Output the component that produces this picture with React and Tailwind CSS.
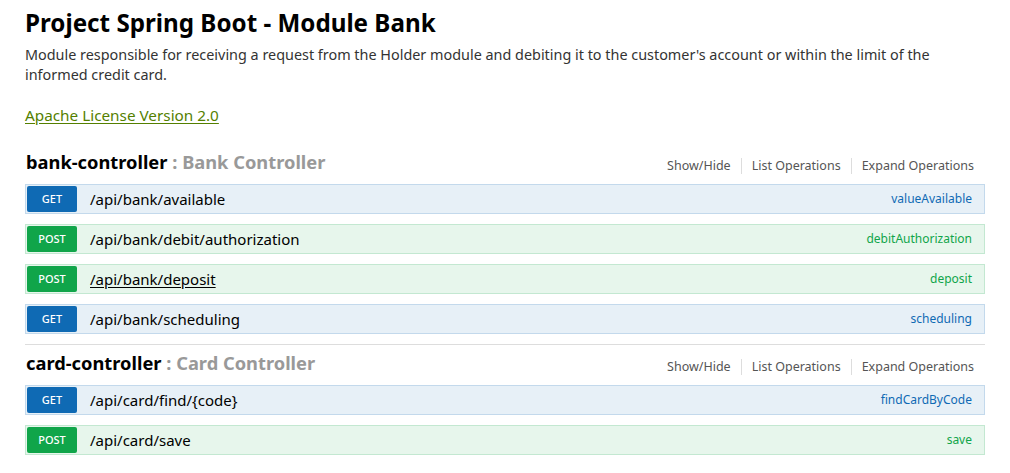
import React from 'react';

const groups = [
  {
    name: 'bank-controller',
    label: 'Bank Controller',
    ops: [
      { method: 'GET', path: '/api/bank/available', id: 'valueAvailable' },
      { method: 'POST', path: '/api/bank/debit/authorization', id: 'debitAuthorization' },
      { method: 'POST', path: '/api/bank/deposit', id: 'deposit', underline: true },
      { method: 'GET', path: '/api/bank/scheduling', id: 'scheduling' },
    ],
  },
  {
    name: 'card-controller',
    label: 'Card Controller',
    ops: [
      { method: 'GET', path: '/api/card/find/{code}', id: 'findCardByCode' },
      { method: 'POST', path: '/api/card/save', id: 'save' },
    ],
  },
];

function Operation({ method, path, id, underline }) {
  const get = method === 'GET';
  return (
    <div
      className={
        'flex items-center h-[30px] border p-px ' +
        (get ? 'bg-[#e7f0f7] border-[#c3d9ec]' : 'bg-[#e7f6ec] border-[#c3e8d1]')
      }
    >
      <span
        className={
          'w-[50px] h-full flex items-center justify-center rounded-[2px] text-[11px] font-medium text-white ' +
          (get ? 'bg-[#0f6ab4]' : 'bg-[#10a54a]')
        }
      >
        {method}
      </span>
      <span className={'ml-[13px] text-[15px] text-black ' + (underline ? 'underline underline-offset-2' : '')}>
        {path}
      </span>
      <span className={'ml-auto mr-[11px] text-[12px] ' + (get ? 'text-[#0f6ab4]' : 'text-[#10a54a]')}>
        {id}
      </span>
    </div>
  );
}

function Group({ name, label, ops, first }) {
  return (
    <div className={first ? 'mt-[19px]' : 'border-t border-[#ddd] mt-[10px]'}>
      <div className="flex items-center justify-between h-[40px] pb-[4px]">
        <h2 className="text-[18.3px] font-bold leading-none text-black pl-px">
          {name}
          <span className="text-[#999]"> : {label}</span>
        </h2>
        <ul className="flex items-center text-[12.5px] text-[#555] leading-none mr-[11px] mt-[8px]">
          <li className="pr-[10px] border-r border-[#ddd] py-[2px]">Show/Hide</li>
          <li className="px-[10px] border-r border-[#ddd] py-[2px]">List Operations</li>
          <li className="pl-[10px] py-[2px]">Expand Operations</li>
        </ul>
      </div>
      <div className="flex flex-col gap-[10px]">
        {ops.map((op) => (
          <Operation key={op.path} {...op} />
        ))}
      </div>
    </div>
  );
}

export default function App() {
  return (
    <div className="bg-white min-h-[473px] pl-[25px] pr-[25px] font-['Noto_Sans','Open_Sans',sans-serif] text-[#333]">
      <div className="w-[960px]">
        <h1 className="text-[24.2px] font-bold text-black leading-[30px] pt-[8px]">
          Project Spring Boot - Module Bank
        </h1>
        <p className="text-[14.4px] leading-[20px] mt-[7px]">
          Module responsible for receiving a request from the Holder module and debiting it to the customer's account or within the limit of the informed credit card.
        </p>
        <a href="#" className="block mt-[20px] text-[15.3px] leading-[20px] text-[#547f00] underline underline-offset-2 w-fit">
          Apache License Version 2.0
        </a>
        <div>
          {groups.map((g, i) => (
            <Group key={g.name} {...g} first={i === 0} />
          ))}
        </div>
      </div>
    </div>
  );
}
